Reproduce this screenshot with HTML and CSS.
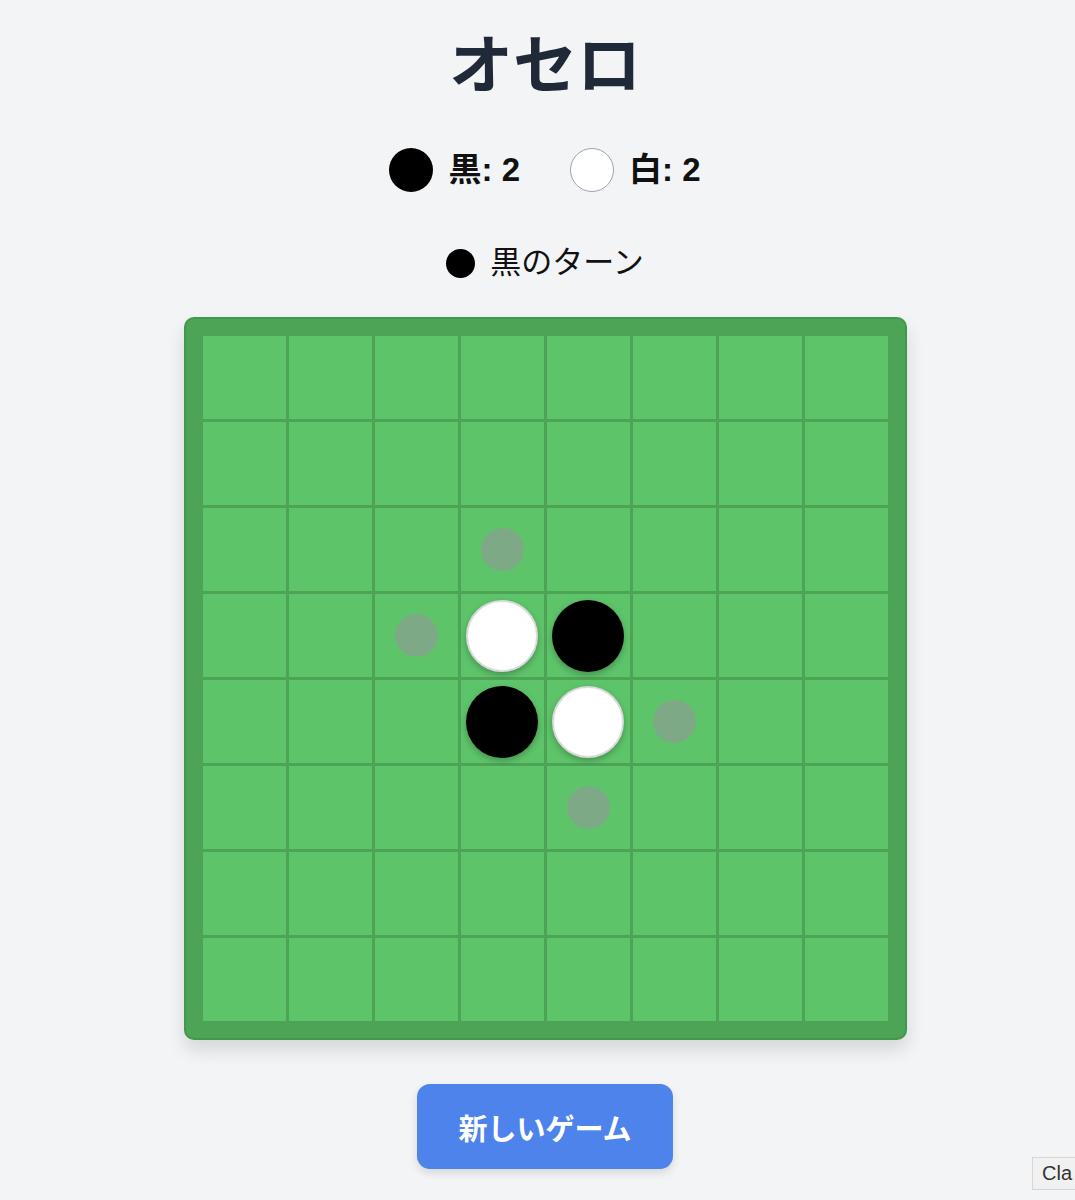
FILE: index.html
```html
<!DOCTYPE html>
<html lang="ja">
<head>
  <meta charset="UTF-8">
  <meta name="viewport" content="width=device-width, initial-scale=1.0">
  <title>オセロ</title>
  <link rel="stylesheet" href="styles.css">
</head>
<body>
  <main class="app">
    <h1 class="title">オセロ</h1>

    <div class="scores">
      <div class="score"><span class="disc black"></span><span>黒: <b id="black-count">2</b></span></div>
      <div class="score"><span class="disc white"></span><span>白: <b id="white-count">2</b></span></div>
    </div>

    <div class="turn"><span class="turn-dot"></span><span id="turn-text">黒のターン</span></div>

    <div class="board" id="board"></div>

    <button class="new-game" id="new-game">新しいゲーム</button>
  </main>

  <div class="corner-tag">Cla</div>

  <script>
    const boardEl = document.getElementById('board');
    const start = { '3,3': 'white', '3,4': 'black', '4,3': 'black', '4,4': 'white' };
    const hints = ['2,3', '3,2', '4,5', '5,4'];

    function render(){
      boardEl.innerHTML = '';
      for(let r=0;r<8;r++){
        for(let c=0;c<8;c++){
          const cell = document.createElement('div');
          cell.className = 'cell';
          const key = r+','+c;
          if(start[key]){
            const p = document.createElement('span');
            p.className = 'piece ' + start[key];
            cell.appendChild(p);
          } else if(hints.includes(key)){
            const h = document.createElement('span');
            h.className = 'hint';
            cell.appendChild(h);
          }
          boardEl.appendChild(cell);
        }
      }
    }

    document.getElementById('new-game').addEventListener('click', render);
    render();
  </script>
</body>
</html>
```

FILE: styles.css
```css
* { box-sizing: border-box; }
body { margin: 0; background: #f3f4f6; font-family: "Liberation Sans", "Noto Sans CJK JP", sans-serif; color: #111; overflow: hidden; }
.app { display: flex; flex-direction: column; align-items: center; padding: 22px 0 40px 15px; }

.title { margin: 0; font-size: 64px; line-height: 88px; font-weight: 700; color: #1f2937; }

.scores { display: flex; gap: 50px; margin-top: 38px; }
.score { display: flex; align-items: center; gap: 15px; font-size: 33px; font-weight: 700; line-height: 44px; }
.score b { font-weight: 700; }
.disc { width: 44px; height: 44px; border-radius: 50%; display: inline-block; }
.disc.black { background: #000; }
.disc.white { background: #fff; border: 1.5px solid #9ca3af; }

.turn { display: flex; align-items: center; gap: 15px; margin-top: 49px; font-size: 31px; line-height: 44px; color: #111; }
.turn-dot { width: 29px; height: 29px; border-radius: 50%; background: #000; }

.board {
  display: grid;
  grid-template-columns: repeat(8, 83px);
  grid-auto-rows: 83px;
  gap: 3px;
  margin-top: 32px;
  padding: 17px;
  background: #4da457;
  border: 2px solid #43964d;
  border-radius: 10px;
  box-shadow: 0 10px 18px rgba(0, 0, 0, 0.12);
}
.cell { background: #5ec46a; display: flex; align-items: center; justify-content: center; }
.piece { width: 72px; height: 72px; border-radius: 50%; box-shadow: 0 3px 6px rgba(0, 0, 0, 0.25); }
.piece.black { background: #000; }
.piece.white { background: #fff; border: 2px solid #dadada; }
.hint { width: 43px; height: 43px; border-radius: 50%; background: rgba(150, 150, 155, 0.58); }

.new-game {
  margin-top: 44px;
  width: 256px;
  height: 85px;
  border: none;
  border-radius: 13px;
  background: #4d83eb;
  color: #fff;
  font-family: inherit;
  font-size: 29px;
  font-weight: 700;
  cursor: pointer;
  box-shadow: 0 4px 8px rgba(0, 0, 0, 0.12);
}

.corner-tag {
  position: fixed;
  left: 1032px;
  top: 1157px;
  padding: 4px 20px 4px 9px;
  background: #f1f1f1;
  border: 1px solid #d6d6d6;
  color: #333;
  font-size: 20px;
  white-space: nowrap;
}
```
